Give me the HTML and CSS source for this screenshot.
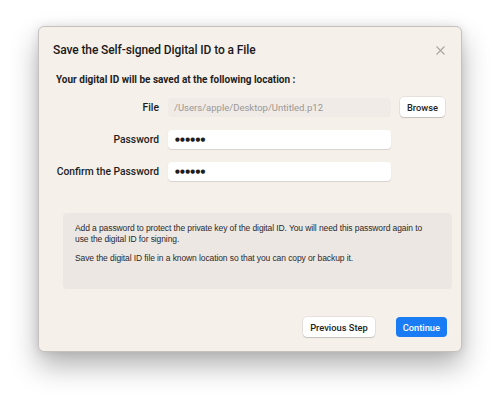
FILE: index.html
```html
<!DOCTYPE html>
<html lang="en">
<head>
    <meta charset="UTF-8">
    <meta name="viewport" content="width=device-width, initial-scale=1.0">
    <title>Save the Self-signed Digital ID</title>
    <link rel="stylesheet" href="styles.css">
</head>
<body>
    <div class="dialog">
        <div class="header">
            <h1>Save the Self-signed Digital ID to a File</h1>
            <svg class="close" width="9" height="9" viewBox="0 0 9 9">
                <path d="M0.5 0.5 L8.5 8.5 M8.5 0.5 L0.5 8.5" stroke="#a9a6a3" stroke-width="1.1" fill="none"/>
            </svg>
        </div>
        <p class="lead">Your digital ID will be saved at the following location :</p>

        <div class="form">
            <label>File</label>
            <div class="field readonly">/Users/apple/Desktop/Untitled.p12</div>
            <button class="btn">Browse</button>

            <label>Password</label>
            <div class="field dots">&#9679;&#9679;&#9679;&#9679;&#9679;&#9679;</div>
            <span></span>

            <label>Confirm the Password</label>
            <div class="field dots">&#9679;&#9679;&#9679;&#9679;&#9679;&#9679;</div>
            <span></span>
        </div>

        <div class="info">
            <p>Add a password to protect the private key of the digital ID. You will need this password again to use the digital ID for signing.</p>
            <p>Save the digital ID file in a known location so that you can copy or backup it.</p>
        </div>

        <div class="footer">
            <button class="btn">Previous Step</button>
            <button class="btn primary">Continue</button>
        </div>
    </div>
</body>
</html>
```

FILE: styles.css
```css
html {
    background-color: #fff;
}
body {
    margin: 0;
    min-height: 406px;
    padding: 26px 0 0 38px;
    box-sizing: border-box;
    font-family: Roboto, "Liberation Sans", sans-serif;
    color: #1d1d1d;
}
.dialog {
    width: 422px;
    height: 324px;
    background-color: #f6f0eb;
    border: 1px solid #c4c1be;
    border-radius: 6px;
    box-shadow: 0 14px 28px rgba(0, 0, 0, 0.3), 0 0 10px rgba(0, 0, 0, 0.1);
    display: flex;
    flex-direction: column;
}
.header {
    display: flex;
    align-items: center;
    justify-content: space-between;
    padding: 16px 16px 0 14px;
}
h1 {
    margin: 0;
    font-size: 12px;
    font-weight: 500;
    letter-spacing: -0.1px;
    color: #1a1a1a;
}
.lead {
    margin: 17px 0 0 17px;
    font-size: 10px;
    font-weight: 700;
}
.form {
    display: grid;
    grid-template-columns: 120px 223px auto;
    column-gap: 9px;
    row-gap: 13px;
    margin-top: 12px;
    align-items: center;
}
.form label {
    text-align: right;
    font-size: 10.3px;
    font-weight: 500;
}
.field {
    height: 19px;
    line-height: 19px;
    padding: 0 6px;
    border-radius: 4px;
    background-color: #fff;
    box-shadow: 0 1px 1px rgba(0, 0, 0, 0.12);
    font-size: 9.5px;
}
.field.readonly {
    background-color: #f0ebe6;
    color: #9a9794;
    box-shadow: none;
}
.field.dots {
    font-family: "DejaVu Sans", sans-serif;
    font-size: 5.5px;
    letter-spacing: 0.3px;
    padding-left: 7px;
}
.btn {
    justify-self: start;
    height: 20px;
    padding: 0 7px;
    border: none;
    border-radius: 4px;
    background-color: #fff;
    box-shadow: 0 0 0 0.5px rgba(0, 0, 0, 0.12), 0 1px 1px rgba(0, 0, 0, 0.15);
    font-family: inherit;
    font-size: 9.3px;
    font-weight: 500;
    color: #222;
}
.info {
    margin: 32px 9px 0 24px;
    height: 76px;
    padding: 10px 22px 10px 12px;
    box-sizing: border-box;
    background-color: #ede7e3;
    border-radius: 4px;
    font-family: "Liberation Sans", Arial, sans-serif;
    font-size: 8.5px;
    letter-spacing: -0.1px;
    color: #2a2a2a;
}
.info p {
    margin: 0 0 8px;
    line-height: 11px;
}
.footer {
    display: flex;
    justify-content: flex-end;
    gap: 21px;
    margin-top: auto;
    padding: 0 14px 14px 0;
}
.btn.primary {
    background-color: #1a7cf4;
    color: #fff;
    box-shadow: none;
}
```
